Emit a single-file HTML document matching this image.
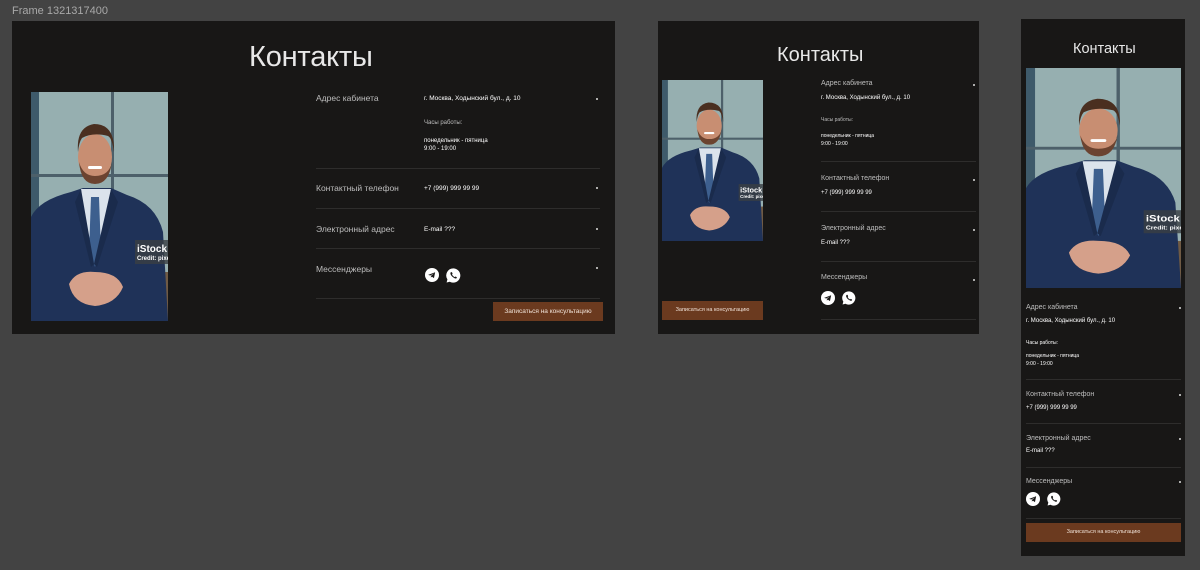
<!DOCTYPE html>
<html><head><meta charset="utf-8">
<style>
*{margin:0;padding:0;box-sizing:border-box}
body{width:1200px;height:570px;background:#434343;position:relative;overflow:hidden;font-family:"Liberation Sans","Noto Sans CJK SC",sans-serif;color:#fff}
.a{position:absolute;white-space:nowrap}
.fr{position:absolute;background:#181716}
.t{color:#e8e8e8;font-weight:300}
.lb{color:#bdbdbd}
.v{color:#fff}
.hr{position:absolute;height:1px;background:#2e2d2c}
.dot{position:absolute;width:2px;height:2px;background:#ddd;border-radius:1px}
.btn{position:absolute;background:#6b3a1f;color:#f0e2d8;text-align:center}
</style></head><body>
<svg width="0" height="0" style="position:absolute">
<defs>
<symbol id="ph" viewBox="0 0 137 229" preserveAspectRatio="none">
<rect width="137" height="229" fill="#8fa8ab"/>
<rect x="0" y="0" width="137" height="229" fill="#9db5b6" opacity=".5"/>
<rect x="0" y="0" width="8" height="229" fill="#3e5a6a"/>
<rect x="80" y="0" width="3" height="229" fill="#4d606a"/>
<rect x="0" y="82" width="137" height="3" fill="#4d606a"/>
<rect x="108" y="180" width="29" height="49" fill="#6f5a44"/>
<path d="M0 125 Q8 108 40 100 L52 96 L80 96 L96 103 Q125 112 132 140 L137 229 L0 229Z" fill="#1f3258"/>
<path d="M50 97 L80 97 L72 150 L63 170 L55 150Z" fill="#dbe3ec"/>
<path d="M60 105 L68 105 L70 160 L64 175 L58 160Z" fill="#3d5f8e"/>
<path d="M50 97 L44 110 L60 175 L63 172Z M80 97 L87 110 L66 175 L63 172Z" fill="#1a2b4c"/>
<ellipse cx="64" cy="65" rx="17" ry="23" fill="#c88e72"/>
<path d="M47 60 Q45 35 63 32 Q84 32 83 60 Q81 46 77 44 Q62 40 51 46 Q48 50 47 60Z" fill="#4a2f20"/>
<path d="M48 70 Q50 92 64 92 Q78 92 81 70 Q78 84 64 84 Q52 84 48 70Z" fill="#6b4330"/>
<rect x="57" y="74" width="14" height="3" rx="1.5" fill="#fff"/>
<path d="M38 192 Q45 178 64 180 Q86 180 92 195 Q85 212 64 214 Q42 212 38 192Z" fill="#d5a08a"/>
<rect x="104" y="148" width="33" height="24" fill="#3a3f44" opacity=".8"/>
<text x="106" y="160" font-family="Liberation Sans,sans-serif" font-size="10" font-weight="bold" fill="#fff">iStock</text>
<text x="106" y="168" font-family="Liberation Sans,sans-serif" font-size="6" font-weight="bold" fill="#fff">Credit: pixel</text>
</symbol>
<symbol id="tg" viewBox="0 0 20 20"><circle cx="10" cy="10" r="10" fill="#fff"/><path d="M4.5 9.8 L14.5 6 L12.8 14.5 L9.8 12.3 L8.3 13.8 L8.5 11.3 L13 7.5 L7.5 10.8Z" fill="#181716"/></symbol>
<symbol id="wa" viewBox="0 0 20 20"><path d="M10 0.5 A9.5 9.5 0 1 1 5 18.3 L0.8 19.3 L1.9 15.2 A9.5 9.5 0 0 1 10 0.5Z" fill="#fff"/><path d="M6.5 5.5 Q5.5 6.5 6 8.2 Q7.5 11.8 11.8 13.8 Q13.5 14.4 14.4 13.3 L14.3 12.2 L12.4 11.3 L11.5 12.2 Q9.2 11.2 8 8.6 L8.8 7.6 L8 5.6Z" fill="#181716"/></symbol>
</defs></svg>

<div class="a" style="left:12px;top:5px;font-size:11px;color:#a8a8a8">Frame 1321317400</div>

<!-- Frame 1 -->
<div class="fr" style="left:12px;top:21px;width:603px;height:313px"></div>
<div class="a t" style="left:249px;top:41px;font-size:29px;letter-spacing:-0.2px">Контакты</div>
<svg class="a" style="left:31px;top:92px" width="137" height="229"><use href="#ph"/></svg>
<div class="a lb" style="left:316px;top:93px;font-size:8.5px">Адрес кабинета</div>
<div class="a v" style="left:424px;top:95px;font-size:6.5px">г. Москва, Ходынский бул., д. 10</div>
<div class="a lb" style="left:424px;top:120px;font-size:6px">Часы работы:</div>
<div class="a v" style="left:424px;top:137px;font-size:6px;line-height:8px">понедельник - пятница<br>9:00 - 19:00</div>
<div class="dot" style="left:596px;top:98px"></div>
<div class="hr" style="left:316px;top:168px;width:284px"></div>
<div class="a lb" style="left:316px;top:183px;font-size:8.5px">Контактный телефон</div>
<div class="a v" style="left:424px;top:185px;font-size:6.5px">+7 (999) 999 99 99</div>
<div class="dot" style="left:596px;top:187px"></div>
<div class="hr" style="left:316px;top:208px;width:284px"></div>
<div class="a lb" style="left:316px;top:224px;font-size:8.5px">Электронный адрес</div>
<div class="a v" style="left:424px;top:226px;font-size:6.5px">E-mail ???</div>
<div class="dot" style="left:596px;top:228px"></div>
<div class="hr" style="left:316px;top:248px;width:284px"></div>
<div class="a lb" style="left:316px;top:264px;font-size:8.5px">Мессенджеры</div>
<svg class="a" style="left:425px;top:268px" width="14" height="14"><use href="#tg"/></svg>
<svg class="a" style="left:446px;top:268px" width="15" height="15"><use href="#wa"/></svg>
<div class="dot" style="left:596px;top:267px"></div>
<div class="hr" style="left:316px;top:298px;width:284px"></div>
<div class="btn" style="left:493px;top:302px;width:110px;height:19px;font-size:6.5px;line-height:19px">Записаться на консультацию</div>

<!-- Frame 2 -->
<div class="fr" style="left:658px;top:21px;width:321px;height:313px"></div>
<div class="a t" style="left:777px;top:44px;font-size:20px">Контакты</div>
<svg class="a" style="left:662px;top:80px" width="101" height="161"><use href="#ph"/></svg>
<div class="a lb" style="left:821px;top:80px;font-size:7px">Адрес кабинета</div>
<div class="a v" style="left:821px;top:95px;font-size:6px">г. Москва, Ходынский бул., д. 10</div>
<div class="a lb" style="left:821px;top:117px;font-size:5px">Часы работы:</div>
<div class="a v" style="left:821px;top:132px;font-size:5px;line-height:8px">понедельник - пятница<br>9:00 - 19:00</div>
<div class="dot" style="left:973px;top:84px"></div>
<div class="hr" style="left:821px;top:161px;width:155px"></div>
<div class="a lb" style="left:821px;top:175px;font-size:7px">Контактный телефон</div>
<div class="a v" style="left:821px;top:190px;font-size:6px">+7 (999) 999 99 99</div>
<div class="dot" style="left:973px;top:179px"></div>
<div class="hr" style="left:821px;top:211px;width:155px"></div>
<div class="a lb" style="left:821px;top:225px;font-size:7px">Электронный адрес</div>
<div class="a v" style="left:821px;top:240px;font-size:6px">E-mail ???</div>
<div class="dot" style="left:973px;top:229px"></div>
<div class="hr" style="left:821px;top:261px;width:155px"></div>
<div class="a lb" style="left:821px;top:274px;font-size:7px">Мессенджеры</div>
<svg class="a" style="left:821px;top:291px" width="14" height="14"><use href="#tg"/></svg>
<svg class="a" style="left:842px;top:291px" width="14" height="14"><use href="#wa"/></svg>
<div class="dot" style="left:973px;top:279px"></div>
<div class="hr" style="left:821px;top:319px;width:155px"></div>
<div class="btn" style="left:662px;top:301px;width:101px;height:19px;font-size:5.5px;line-height:19px">Записаться на консультацию</div>

<!-- Frame 3 -->
<div class="fr" style="left:1021px;top:19px;width:164px;height:537px"></div>
<div class="a t" style="left:1073px;top:41px;font-size:14.5px">Контакты</div>
<svg class="a" style="left:1026px;top:68px" width="155" height="220"><use href="#ph"/></svg>
<div class="a lb" style="left:1026px;top:304px;font-size:7px">Адрес кабинета</div>
<div class="a v" style="left:1026px;top:318px;font-size:6px">г. Москва, Ходынский бул., д. 10</div>
<div class="a v" style="left:1026px;top:340px;font-size:5px">Часы работы:</div>
<div class="a v" style="left:1026px;top:352px;font-size:5px;line-height:8px">понедельник - пятница<br>9:00 - 19:00</div>
<div class="dot" style="left:1179px;top:307px"></div>
<div class="hr" style="left:1026px;top:379px;width:155px"></div>
<div class="a lb" style="left:1026px;top:391px;font-size:7px">Контактный телефон</div>
<div class="a v" style="left:1026px;top:405px;font-size:6px">+7 (999) 999 99 99</div>
<div class="dot" style="left:1179px;top:394px"></div>
<div class="hr" style="left:1026px;top:423px;width:155px"></div>
<div class="a lb" style="left:1026px;top:435px;font-size:7px">Электронный адрес</div>
<div class="a v" style="left:1026px;top:448px;font-size:6px">E-mail ???</div>
<div class="dot" style="left:1179px;top:438px"></div>
<div class="hr" style="left:1026px;top:467px;width:155px"></div>
<div class="a lb" style="left:1026px;top:478px;font-size:7px">Мессенджеры</div>
<svg class="a" style="left:1026px;top:492px" width="14" height="14"><use href="#tg"/></svg>
<svg class="a" style="left:1047px;top:492px" width="14" height="14"><use href="#wa"/></svg>
<div class="dot" style="left:1179px;top:481px"></div>
<div class="hr" style="left:1026px;top:518px;width:155px"></div>
<div class="btn" style="left:1026px;top:523px;width:155px;height:19px;font-size:5.5px;line-height:19px">Записаться на консультацию</div>
</body></html>
